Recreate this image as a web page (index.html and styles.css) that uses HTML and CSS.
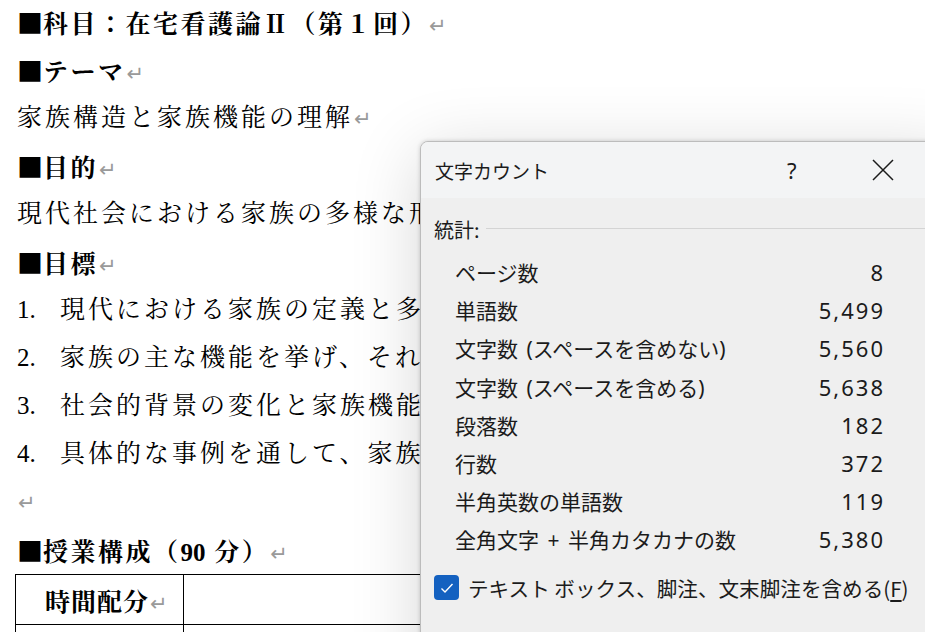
FILE: index.html
```html
<!DOCTYPE html>
<html lang="ja">
<head>
<meta charset="utf-8">
<title>文字カウント</title>
<link rel="stylesheet" href="styles.css">
</head>
<body>
<div class="doc">
  <p class="line head"><span class="sq">■</span>科目：在宅看護論Ⅱ（第１回）<span class="pm">↵</span></p>
  <p class="line head"><span class="sq">■</span>テーマ<span class="pm">↵</span></p>
  <p class="line">家族構造と家族機能の理解<span class="pm">↵</span></p>
  <p class="line head"><span class="sq">■</span>目的<span class="pm">↵</span></p>
  <p class="line">現代社会における家族の多様な形態と機能を理解し、看護に活かす視点を養う。<span class="pm">↵</span></p>
  <p class="line head"><span class="sq">■</span>目標<span class="pm">↵</span></p>
  <p class="line"><span class="num">1.</span>現代における家族の定義と多様な形態を説明できる。<span class="pm">↵</span></p>
  <p class="line"><span class="num">2.</span>家族の主な機能を挙げ、それぞれの意義を説明できる。<span class="pm">↵</span></p>
  <p class="line"><span class="num">3.</span>社会的背景の変化と家族機能の関係を考察できる。<span class="pm">↵</span></p>
  <p class="line"><span class="num">4.</span>具体的な事例を通して、家族への看護の視点を述べられる。<span class="pm">↵</span></p>
  <p class="line"><span class="pm">↵</span></p>
  <p class="line head"><span class="sq">■</span>授業構成（<span class="lat">90</span> 分）<span class="pm">↵</span></p>
  <table class="tbl">
    <tr><td class="c1">時間配分<span class="pm">↵</span></td><td class="c2"></td></tr>
    <tr><td class="c1"></td><td class="c2"></td></tr>
  </table>
</div>

<div class="dialog">
  <div class="titlebar">
    <span class="title">文字カウント</span>
    <span class="help">?</span>
    <span class="close">
      <svg width="22" height="22" viewBox="0 0 22 22"><path d="M1 1 L21 21 M21 1 L1 21" stroke="#1b1b1b" stroke-width="1.5" fill="none"/></svg>
    </span>
  </div>
  <div class="dbody">
    <div class="group"><span class="glabel">統計:</span><span class="gline"></span></div>
    <div class="stats">
      <div class="row"><span class="lbl">ページ数</span><span class="val">8</span></div>
      <div class="row"><span class="lbl">単語数</span><span class="val">5,499</span></div>
      <div class="row"><span class="lbl">文字数 (スペースを含めない)</span><span class="val">5,560</span></div>
      <div class="row"><span class="lbl">文字数 (スペースを含める)</span><span class="val">5,638</span></div>
      <div class="row"><span class="lbl">段落数</span><span class="val">182</span></div>
      <div class="row"><span class="lbl">行数</span><span class="val">372</span></div>
      <div class="row"><span class="lbl">半角英数の単語数</span><span class="val">119</span></div>
      <div class="row"><span class="lbl">全角文字 + 半角カタカナの数</span><span class="val">5,380</span></div>
    </div>
    <div class="check">
      <span class="box"><svg width="14" height="12" viewBox="0 0 14 12"><path d="M1.5 6.5 L5 10 L12.5 2" stroke="#fff" stroke-width="1.4" fill="none"/></svg></span>
      <span class="ctext">テキスト ボックス、脚注、文末脚注を含める(<u>F</u>)</span>
    </div>
  </div>
</div>
</body>
</html>
```
FILE: styles.css
```css
html, body {
  margin: 0;
  padding: 0;
  width: 925px;
  height: 632px;
  overflow: hidden;
  background: #ffffff;
}

.doc {
  margin-top: -2px;
  padding-left: 17px;
  font-family: "Liberation Serif", "Noto Serif CJK JP", "Noto Sans CJK JP", serif;
  font-size: 25px;
  color: #000;
}

.line {
  margin: 0;
  height: 48px;
  line-height: 48px;
  white-space: nowrap;
  letter-spacing: 3px;
}

.head {
  font-weight: 700;
  letter-spacing: 2.5px;
}

.sq {
  font-family: "Noto Sans CJK JP", sans-serif;
  font-size: 26px;
  letter-spacing: 0;
}

.pm {
  font-family: "DejaVu Sans", sans-serif;
  font-weight: 400;
  font-size: 21px;
  color: #9a9a9a;
  letter-spacing: 0;
  margin-left: 1px;
}

.num {
  display: inline-block;
  width: 43px;
  letter-spacing: 0;
}

.lat {
  letter-spacing: 0;
}

.tbl {
  margin-left: -2px;
  border-collapse: collapse;
  width: 800px;
}

.tbl td {
  border: 1px solid #000;
  height: 49px;
  padding: 0;
  font-size: 25px;
  white-space: nowrap;
}

.tbl .c1 {
  width: 168px;
  padding-left: 29px;
  box-sizing: border-box;
  font-weight: 700;
  letter-spacing: 1px;
}

/* dialog */
.dialog {
  position: absolute;
  left: 420px;
  top: 141px;
  width: 540px;
  height: 560px;
  background: #efefef;
  border: 1px solid #bcbcbc;
  border-radius: 8px;
  box-shadow: 0 0 4px rgba(0, 0, 0, 0.18), 0 12px 70px rgba(0, 0, 0, 0.16);
  font-family: "Noto Sans", "Noto Sans CJK JP", sans-serif;
  color: #1b1b1b;
  overflow: hidden;
}

.titlebar {
  height: 56px;
  background: #f3f4f5;
  display: flex;
  align-items: center;
  padding-left: 14px;
}

.title {
  font-family: "Noto Sans CJK JP", sans-serif;
  font-size: 19px;
  flex: 1;
}

.help {
  font-size: 22px;
  width: 85px;
}

.close {
  display: flex;
  width: 22px;
  margin-right: 67px;
  align-items: center;
}

.dbody {
  padding: 14px 0 0 13px;
}

.group {
  display: flex;
  align-items: center;
  height: 34px;
  padding-right: 31px;
}

.glabel {
  font-family: "Noto Sans CJK JP", sans-serif;
  font-size: 20px;
  margin-right: 6px;
}

.gline {
  flex: 1;
  height: 1px;
  background: #d4d4d4;
  margin-top: -2px;
}

.stats {
  margin-top: 7px;
  margin-left: 21px;
  width: 430px;
}

.row {
  display: flex;
  justify-content: space-between;
  align-items: center;
  height: 38.2px;
  font-size: 21px;
}

.lbl {
  font-family: "Noto Sans", "Noto Sans CJK JP", sans-serif;
  word-spacing: 3px;
}

.val {
  font-size: 22px;
  letter-spacing: 2px;
}

.check {
  display: flex;
  align-items: center;
  margin-top: 14px;
  height: 30px;
}

.box {
  width: 25px;
  height: 25px;
  border-radius: 4px;
  background: #1461c0;
  display: flex;
  align-items: center;
  justify-content: center;
  margin-right: 9px;
}

.ctext {
  font-family: "Noto Sans CJK JP", sans-serif;
  font-size: 20.6px;
}

.ctext u {
  text-underline-offset: 3px;
}
```
